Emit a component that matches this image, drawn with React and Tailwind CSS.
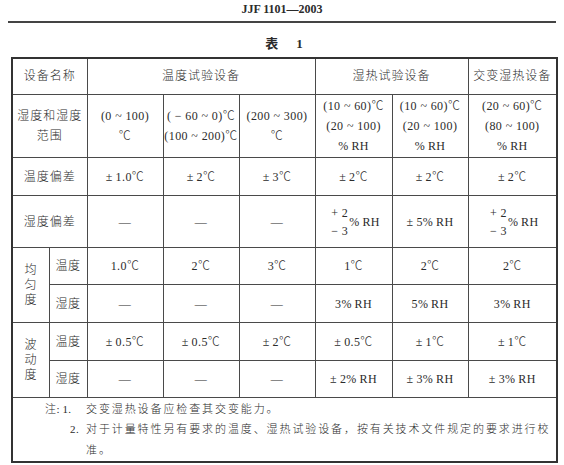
const RH = '%\u2009RH';

function Cell({ children, className = '', ...rest }) {
  return (
    <td className={`border border-[#4a4a4a] p-0 text-center align-middle ${className}`} {...rest}>
      {children}
    </td>
  );
}

function Stack({ lines }) {
  return (
    <div className="flex flex-col items-center leading-[20px]">
      {lines.map((l, i) => (
        <span key={i} className="whitespace-nowrap">{l}</span>
      ))}
    </div>
  );
}

function PlusMinus() {
  return (
    <div className="inline-flex items-center pl-[4px]">
      <div className="flex flex-col items-start leading-[18px] text-[12px]">
        <span>+ 2</span>
        <span>− 3</span>
      </div>
      <span className="ml-[1px]">{RH}</span>
    </div>
  );
}

function Vertical({ text }) {
  return (
    <div className="flex flex-col items-center leading-[15px]">
      {text.split('').map((c, i) => (
        <span key={i}>{c}</span>
      ))}
    </div>
  );
}

export default function App() {
  return (
    <div className="w-[564px] h-[465px] overflow-hidden bg-white text-[#2b2b2b] font-['Liberation_Serif','Noto_Sans_CJK_SC',serif]">
      {/* page header */}
      <div className="pt-[2px] text-center text-[12px] leading-[14px] font-bold">JJF 1101—2003</div>
      <div className="mx-[8px] mt-[5px] h-[1.5px] bg-[#444]" />
      <div className="mt-[13px] flex justify-center gap-[18px] pl-[4px] text-[13px] leading-[16px] font-bold">
        <span>表</span>
        <span>1</span>
      </div>

      {/* table */}
      <table className="mt-[5px] ml-[11px] w-[547px] table-fixed border-collapse border-2 border-[#333] text-[12px] font-light tracking-[0.4px]">
        <colgroup>
          <col className="w-[37px]" />
          <col className="w-[38px]" />
          <col className="w-[76px]" />
          <col className="w-[76px]" />
          <col className="w-[76px]" />
          <col className="w-[77px]" />
          <col className="w-[76px]" />
          <col />
        </colgroup>
        <tbody>
          <tr className="h-[37px]">
            <Cell colSpan={2} className="tracking-[1px]">设备名称</Cell>
            <Cell colSpan={3} className="tracking-[1px]">温度试验设备</Cell>
            <Cell colSpan={2} className="tracking-[1px]">湿热试验设备</Cell>
            <Cell className="tracking-[1px]">交变湿热设备</Cell>
          </tr>
          <tr className="h-[63px]">
            <Cell colSpan={2} className="tracking-[1px]">
              <Stack lines={['湿度和湿度', '范围']} />
            </Cell>
            <Cell><Stack lines={['(0 ~ 100)', '℃']} /></Cell>
            <Cell><Stack lines={['( − 60 ~ 0)℃', '(100 ~ 200)℃']} /></Cell>
            <Cell><Stack lines={['(200 ~ 300)', '℃']} /></Cell>
            <Cell><Stack lines={['(10 ~ 60)℃', '(20 ~ 100)', RH]} /></Cell>
            <Cell><Stack lines={['(10 ~ 60)℃', '(20 ~ 100)', RH]} /></Cell>
            <Cell><Stack lines={['(20 ~ 60)℃', '(80 ~ 100)', RH]} /></Cell>
          </tr>
          <tr className="h-[38px]">
            <Cell colSpan={2} className="tracking-[1px]">温度偏差</Cell>
            <Cell>±&thinsp;1.0℃</Cell>
            <Cell>±&thinsp;2℃</Cell>
            <Cell>±&thinsp;3℃</Cell>
            <Cell>±&thinsp;2℃</Cell>
            <Cell>±&thinsp;2℃</Cell>
            <Cell>±&thinsp;2℃</Cell>
          </tr>
          <tr className="h-[52px]">
            <Cell colSpan={2} className="tracking-[1px]">湿度偏差</Cell>
            <Cell>—</Cell>
            <Cell>—</Cell>
            <Cell>—</Cell>
            <Cell><PlusMinus /></Cell>
            <Cell>±&thinsp;5{RH}</Cell>
            <Cell><PlusMinus /></Cell>
          </tr>
          <tr className="h-[37px]">
            <Cell rowSpan={2}><Vertical text="均匀度" /></Cell>
            <Cell>温度</Cell>
            <Cell>1.0℃</Cell>
            <Cell>2℃</Cell>
            <Cell>3℃</Cell>
            <Cell>1℃</Cell>
            <Cell>2℃</Cell>
            <Cell>2℃</Cell>
          </tr>
          <tr className="h-[38px]">
            <Cell>湿度</Cell>
            <Cell>—</Cell>
            <Cell>—</Cell>
            <Cell>—</Cell>
            <Cell>3{RH}</Cell>
            <Cell>5{RH}</Cell>
            <Cell>3{RH}</Cell>
          </tr>
          <tr className="h-[38px]">
            <Cell rowSpan={2}><Vertical text="波动度" /></Cell>
            <Cell>温度</Cell>
            <Cell>±&thinsp;0.5℃</Cell>
            <Cell>±&thinsp;0.5℃</Cell>
            <Cell>±&thinsp;2℃</Cell>
            <Cell>±&thinsp;0.5℃</Cell>
            <Cell>±&thinsp;1℃</Cell>
            <Cell>±&thinsp;1℃</Cell>
          </tr>
          <tr className="h-[37px]">
            <Cell>湿度</Cell>
            <Cell>—</Cell>
            <Cell>—</Cell>
            <Cell>—</Cell>
            <Cell>±&thinsp;2{RH}</Cell>
            <Cell>±&thinsp;3{RH}</Cell>
            <Cell>±&thinsp;3{RH}</Cell>
          </tr>
          <tr className="h-[64px]">
            <td colSpan={8} className="border border-[#4a4a4a] p-0 align-middle">
              <div className="flex flex-col pl-[32px] text-[11px] leading-[20.5px] text-left">
                <div className="flex whitespace-nowrap">
                  <span className="w-[41px]">注:&thinsp;1.</span>
                  <span className="tracking-[1.9px]">交变湿热设备应检查其交变能力。</span>
                </div>
                <div className="flex whitespace-nowrap">
                  <span className="w-[41px] pl-[25px]">2.</span>
                  <span className="tracking-[1.9px]">
                    对于计量特性另有要求的温度、湿热试验设备，按有关技术文件规定的要求进行校
                    <br />
                    准。
                  </span>
                </div>
              </div>
            </td>
          </tr>
        </tbody>
      </table>
    </div>
  );
}
